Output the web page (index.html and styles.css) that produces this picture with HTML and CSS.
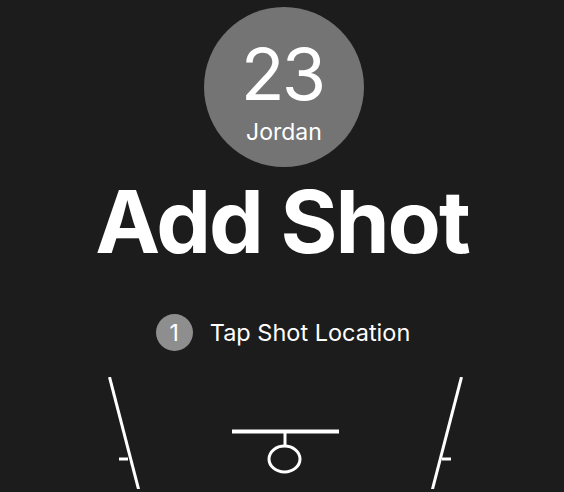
FILE: index.html
```html
<!DOCTYPE html>
<html>
<head>
<meta charset="utf-8">
<link rel="stylesheet" href="styles.css">
</head>
<body>
<main class="screen">
  <div class="player">
    <span class="player-number">23</span>
    <span class="player-name">Jordan</span>
  </div>
  <h1 class="title">Add Shot</h1>
  <div class="step">
    <span class="step-badge">1</span>
    <span class="step-label">Tap Shot Location</span>
  </div>
  <svg class="court" width="564" height="112" viewBox="0 0 564 112" xmlns="http://www.w3.org/2000/svg">
    <g stroke="#ffffff" stroke-width="3" fill="none">
      <line x1="109.5" y1="0" x2="139" y2="114"/>
      <line x1="119" y1="82" x2="128" y2="82"/>
      <line x1="461.5" y1="0" x2="432" y2="114"/>
      <line x1="451" y1="82" x2="442" y2="82"/>
      <line x1="232" y1="54.5" x2="339" y2="54.5" stroke-width="4"/>
      <line x1="285" y1="54.5" x2="285" y2="69"/>
      <ellipse cx="284.5" cy="82" rx="15.5" ry="13"/>
    </g>
  </svg>
</main>
</body>
</html>
```
FILE: styles.css
```css
html, body {
  margin: 0;
  padding: 0;
  background: #1c1c1c;
}
.screen {
  width: 564px;
  height: 492px;
  overflow: hidden;
  display: flex;
  flex-direction: column;
  align-items: center;
  font-family: Inter, "Noto Sans", sans-serif;
  color: #ffffff;
}
.player {
  margin-top: 7px;
  margin-left: 4px;
  width: 160px;
  height: 160px;
  border-radius: 50%;
  background: #747474;
  display: flex;
  flex-direction: column;
  align-items: center;
}
.player-number {
  margin-top: 31px;
  font-size: 72px;
  font-weight: 400;
  line-height: 72px;
  letter-spacing: -3px;
  margin-right: 4px;
}
.player-name {
  margin-top: 9px;
  font-size: 23px;
  line-height: 26px;
}
.title {
  margin: 5px 0 0 0;
  font-size: 87px;
  font-weight: 700;
  line-height: 100px;
  letter-spacing: -2px;
}
.step {
  margin-top: 42px;
  margin-left: 2px;
  display: flex;
  align-items: center;
  gap: 17px;
}
.step-badge {
  width: 37px;
  height: 37px;
  border-radius: 50%;
  background: #8e8e8e;
  display: flex;
  align-items: center;
  justify-content: center;
  font-size: 23px;
}
.step-label {
  font-size: 23.5px;
  line-height: 28px;
}
.court {
  display: block;
  margin-top: 26px;
  flex-shrink: 0;
}
```
